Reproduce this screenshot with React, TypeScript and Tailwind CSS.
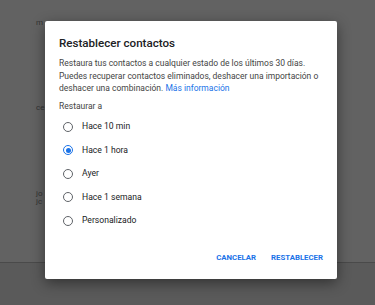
import { useState } from 'react';

const options = ['Hace 10 min', 'Hace 1 hora', 'Ayer', 'Hace 1 semana', 'Personalizado'];

const Radio = ({ checked }: { checked: boolean }) => (
  <span
    className={
      'flex items-center justify-center w-[10px] h-[10px] rounded-full border-[1.5px] ' +
      (checked ? 'border-[#1a73e8]' : 'border-[#5f6368]')
    }
  >
    {checked && <span className="w-[5px] h-[5px] rounded-full bg-[#1a73e8]" />}
  </span>
);

const App = () => {
  const [selected, setSelected] = useState(1);

  return (
    <div
      className="relative w-[375px] h-[305px] overflow-hidden bg-[#626262]"
      style={{ fontFamily: 'Roboto, "Liberation Sans", sans-serif' }}
    >
      {/* page behind the overlay */}
      <div className="flex flex-col h-full text-[8px] text-[#333]">
        <div className="flex pl-[36px] pt-[17px] h-[62px]">
          <span>m</span>
          <span className="ml-[198px] text-[#3a3a3a]">·····················</span>
        </div>
        <div className="pl-[36px] pt-[40px] h-[104px]">ce</div>
        <div className="pl-[36px] pt-[22px] h-[28px]">jo</div>
        <div className="pl-[36px] pt-[2px] h-[68px]">jc</div>
        <div className="flex-1 bg-[#5a5a5a] border-t border-[#4a4a4a]" />
      </div>

      {/* dialog */}
      <div className="absolute left-[45px] top-[21px] w-[292px] h-[258px] bg-white rounded-[2px] shadow-[0_4px_14px_rgba(0,0,0,0.45)] flex flex-col px-[14px]">
        <h2 className="mt-[14px] text-[11.6px] leading-[16px] font-medium text-[#202124]">
          Restablecer contactos
        </h2>
        <p className="mt-[6px] text-[8.5px] leading-[12.5px] text-[#444]">
          Restaura tus contactos a cualquier estado de los últimos 30 días. Puedes recuperar
          contactos eliminados, deshacer una importación o deshacer una combinación.{' '}
          <span className="text-[#1a73e8]">Más información</span>
        </p>
        <div className="mt-[5px] text-[8.5px] leading-[12.5px] text-[#444]">Restaurar a</div>
        <div className="mt-[3px] flex flex-col">
          {options.map((o, i) => (
            <button
              key={o}
              onClick={() => setSelected(i)}
              className="flex items-center h-[23.5px] pl-[4px] gap-[9px] text-[8.6px] text-[#202124]"
            >
              <Radio checked={i === selected} />
              <span>{o}</span>
            </button>
          ))}
        </div>
        <div className="mt-auto mb-[9px] flex justify-end items-center gap-[15px] h-[24px] text-[7.8px] font-bold text-[#1a73e8]">
          <button>CANCELAR</button>
          <button>RESTABLECER</button>
        </div>
      </div>
    </div>
  );
};

export default App;
